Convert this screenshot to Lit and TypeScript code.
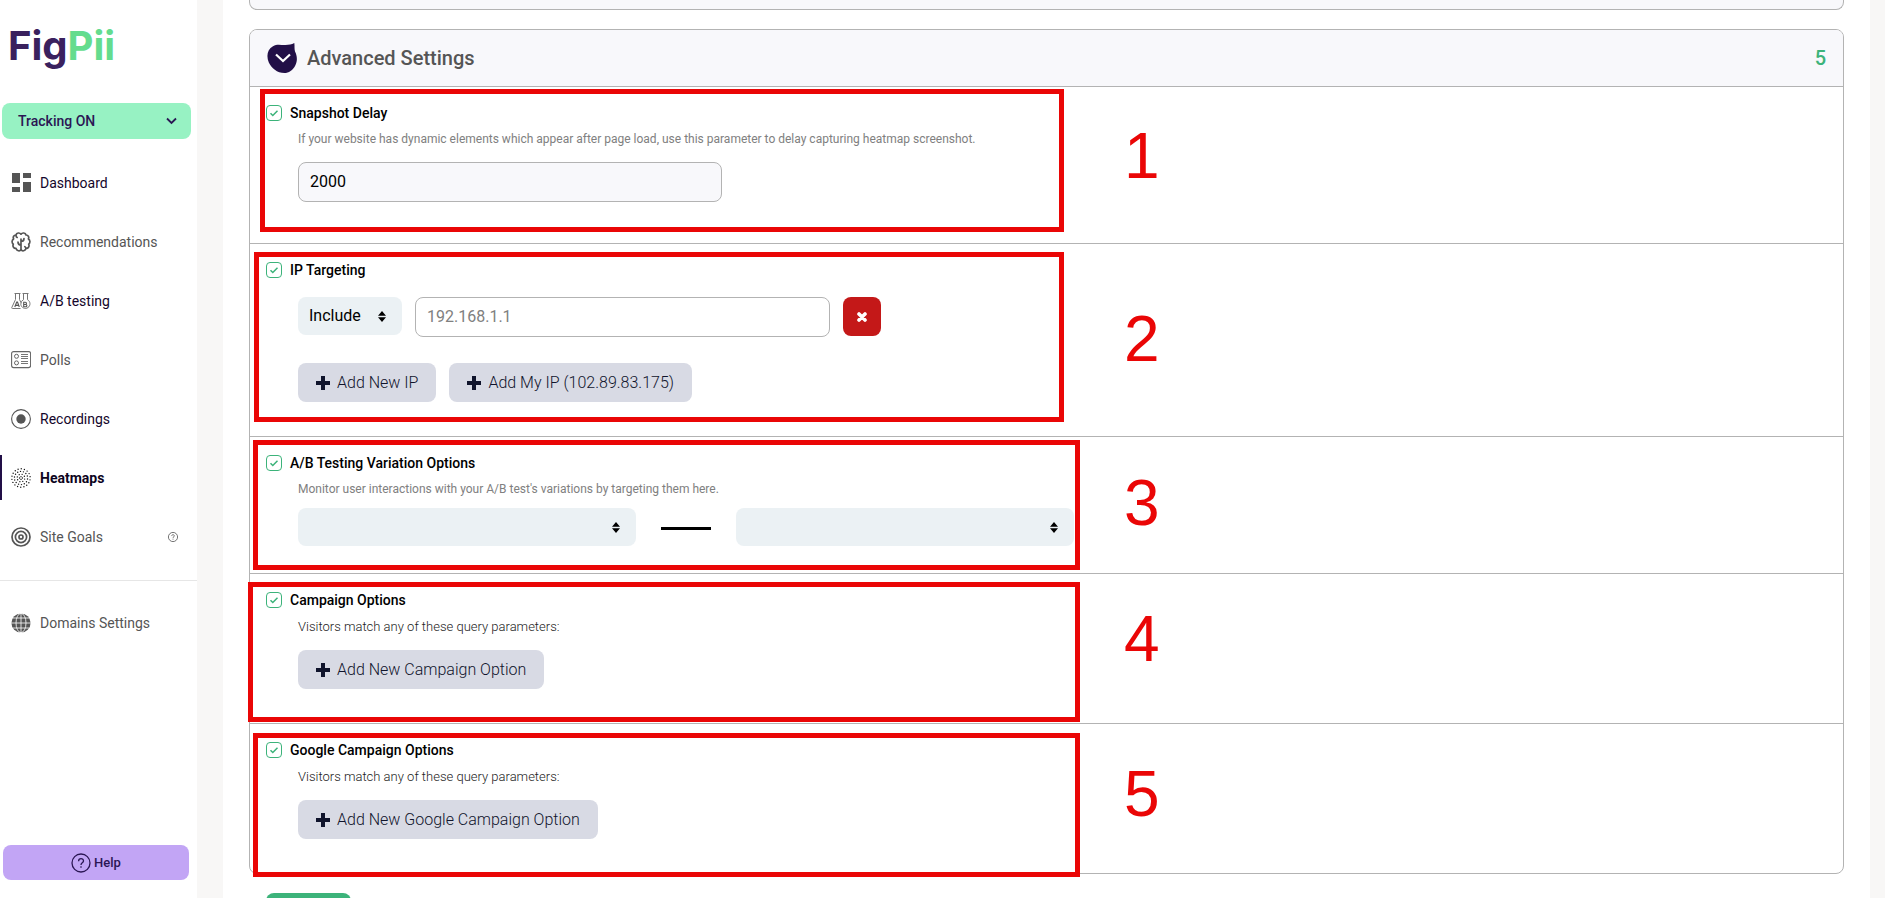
import { LitElement, html, css, svg, nothing, type TemplateResult } from "lit";
import { customElement, property } from "lit/decorators.js";
import { classMap } from "lit/directives/class-map.js";

type NavItem = {
  label: string;
  icon: TemplateResult;
  tone?: "dark" | "active";
  hint?: boolean;
};

const heatDots = [
  { r: 1.4, n: 4 },
  { r: 3.8, n: 8 },
  { r: 6.6, n: 14 },
  { r: 9.2, n: 18 },
].flatMap(({ r, n }, ring) =>
  Array.from({ length: n }, (_, i) => {
    const a = (i / n) * Math.PI * 2 + ring * 0.3;
    return svg`<circle cx=${10 + r * Math.cos(a)} cy=${10 + r * Math.sin(a)} r="0.7" fill="#111"/>`;
  })
);

const icons = {
  dashboard: svg`<g fill="#555"><path d="M1 0h8v10H1zM12 0h8v5h-8zM1 14h8v5H1zM12 9h8v10h-8z"/></g>`,
  brain: svg`<g fill="none" stroke="#555" stroke-width="1.700" stroke-linecap="round" stroke-linejoin="round">
    <path d="M10 2.200C8.800 .4 5.500 .6 5 3 2.900 2.900 1.600 5 2.600 6.900.700 8 .600 11 2.300 12.200 1.300 14.500 2.900 16.700 5 16.400 5.600 19 8.800 19.500 10 17.800 11.200 19.500 14.400 19 15 16.400 17.100 16.700 18.700 14.500 17.700 12.200 19.400 11 19.300 8 17.400 6.900 18.400 5 17.100 2.900 15 3 14.500.600 11.200.400 10 2.200z"/>
    <path d="M10 7v10.500M10 9.500c2 0 3-1 3-3M10 13c-2 0-3-.8-3-3M5 3.400c0 1 .4 1.600 1.200 2M15 16.400c-.2-1-.6-1.400-1.200-1.800"/></g>`,
  flasks: svg`<g fill="none" stroke="#777" stroke-width="1">
    <path d="M3.500 2.500h6M4.500 2.500v6L.8 16.500c-.2.700.1 1 .7 1h8M8.500 2.500v6l1.500 3.200M11.500 2.500h6M12.500 2.500v6.200M16.500 2.500v6.200a4.600 4.600 0 1 1-6.700 4.600 4.600 4.600 0 0 1 2.700-4.600"/></g>
    <path d="M3.800 16l1.900-5h.8L8.300 16M4.600 14.400h3" fill="none" stroke="#555" stroke-width="1.100"/>
    <path d="M12.700 11.200v4.600h1.800c1.800 0 1.800-2.300 0-2.300h-1.800 1.600c1.600 0 1.600-2.300 0-2.300z" fill="none" stroke="#555" stroke-width="1.100"/>`,
  polls: svg`<g fill="none" stroke="#666"><rect x=".6" y="1.600" width="19" height="16" rx="2" stroke-width="1.100"/>
    <circle cx="5.500" cy="6.300" r="2"/><circle cx="5.500" cy="12.900" r="2"/>
    <path d="M10 4.500h7M10 6.500h7M10 8.500h7M10 11.500h7M10 13.500h7" stroke-width=".9"/></g>`,
  record: svg`<circle cx="10" cy="10" r="9.400" fill="none" stroke="#555" stroke-width="1.100"/><circle cx="10" cy="10" r="4.700" fill="#555"/>`,
  heatmap: svg`${heatDots}`,
  target: svg`<g fill="none" stroke="#555" stroke-width="1.700"><circle cx="10" cy="10" r="9"/><circle cx="10" cy="10" r="5.600"/><circle cx="10" cy="10" r="2"/></g>`,
  globe: svg`<circle cx="10" cy="10" r="9.600" fill="#555"/><g fill="none" stroke="#fff" stroke-width=".8"><ellipse cx="10" cy="10" rx="5" ry="9.600"/><path d="M10 0v20M0 10h20M1.500 5h17M1.500 15h17"/></g>`,
};

const navItems: NavItem[] = [
  { label: "Dashboard", icon: icons.dashboard, tone: "dark" },
  { label: "Recommendations", icon: icons.brain },
  { label: "A/B testing", icon: icons.flasks, tone: "dark" },
  { label: "Polls", icon: icons.polls },
  { label: "Recordings", icon: icons.record, tone: "dark" },
  { label: "Heatmaps", icon: icons.heatmap, tone: "active" },
  { label: "Site Goals", icon: icons.target, hint: true },
];

@customElement("side-bar")
export class SideBar extends LitElement {
  static styles = css`
    :host {
      display: flex;
      flex-direction: column;
      background: #fff;
      font-family: Roboto, sans-serif;
      font-size: 14px;
      color: #555;
    }
    .logo {
      padding: 22px 8px 0;
      font: 700 40px/48px Inter, sans-serif;
      color: #3a215e;
      text-decoration: none;
    }
    .logo-tail {
      color: #64dc8e;
    }
    .tracking {
      display: flex;
      align-items: center;
      justify-content: space-between;
      height: 36px;
      margin: 33px 6px 14px 2px;
      padding: 0 14px 0 16px;
      border: 0;
      border-radius: 8px;
      background: #97f2c3;
      color: #2b1654;
      font: 500 14px Roboto, sans-serif;
    }
    nav {
      display: flex;
      flex-direction: column;
    }
    .item {
      display: flex;
      align-items: center;
      gap: 9px;
      height: 45px;
      margin: 7px 0;
      padding: 0 18px 0 9px;
      border-left: 2px solid transparent;
      color: #555;
      text-decoration: none;
    }
    .item.dark {
      color: #14062b;
    }
    .item.active {
      border-left-color: #220f47;
      color: #0d0420;
      font-weight: 700;
    }
    .label {
      flex: 1;
    }
    .rule {
      width: 100%;
      height: 0;
      margin: 14px 0 12px;
      border: 0;
      border-top: 1px solid #e6e6e6;
    }
    .help {
      display: flex;
      align-items: center;
      justify-content: center;
      gap: 3px;
      height: 35px;
      margin: auto 8px 18px 3px;
      border: 0;
      border-radius: 8px;
      background: #c2a5f5;
      color: #2b1654;
      font: 500 13px Roboto, sans-serif;
    }
  `;

  private item({ label, icon, tone, hint }: NavItem) {
    return html`<a href="#" class=${classMap({ item: true, dark: tone === "dark", active: tone === "active" })}>
      <svg width="20" height="20" viewBox="0 0 20 20" aria-hidden="true">${icon}</svg>
      <span class="label">${label}</span>
      ${hint
        ? html`<svg width="12" height="12" viewBox="0 0 12 12" aria-hidden="true">
            <circle cx="6" cy="6" r="4.600" fill="none" stroke="#666" stroke-width=".9" />
            <path d="M4.700 5c0-1.800 2.700-1.700 2.600-.1 0 .9-1.300 1-1.300 2M6 7.700v.9" fill="none" stroke="#666" stroke-width=".9" />
          </svg>`
        : nothing}
    </a>`;
  }

  render() {
    return html`
      <a class="logo" href="#">Fig<span class="logo-tail">Pii</span></a>
      <button class="tracking" type="button">
        Tracking ON
        <svg width="11" height="8" viewBox="0 0 11 8" aria-hidden="true">
          <path d="M1 1.500l4.500 4.500L10 1.500" fill="none" stroke="#2b1654" stroke-width="1.800" />
        </svg>
      </button>
      <nav>
        ${navItems.map((n) => this.item(n))}
        <hr class="rule" />
        ${this.item({ label: "Domains Settings", icon: icons.globe })}
      </nav>
      <button class="help" type="button">
        <svg width="20" height="20" viewBox="0 0 20 20" aria-hidden="true">
          <circle cx="10" cy="10" r="9" fill="none" stroke="#2b1654" stroke-width="1.300" />
          <path d="M7.600 8.200c0-3.400 5-3.200 4.900-.2-.1 1.800-2.500 1.900-2.500 4M10 13.300v1.500" fill="none" stroke="#2b1654" stroke-width="1.300" />
        </svg>
        Help
      </button>
    `;
  }
}

@customElement("setting-section")
export class SettingSection extends LitElement {
  @property() heading = "";
  @property() note = "";
  @property({ type: Boolean }) plain = false;

  static styles = css`
    :host {
      display: block;
      padding: 18px 16px 0;
      font-family: Roboto, sans-serif;
    }
    .heading {
      display: flex;
      align-items: center;
      gap: 8px;
      height: 16px;
      color: #000;
      font-size: 14px;
      line-height: 16px;
      font-weight: 500;
    }
    .tick {
      appearance: none;
      width: 16px;
      height: 16px;
      margin: 0;
      border: 1px solid #3cb37a;
      border-radius: 4px;
      background: #fff
        url("data:image/svg+xml,%3Csvg xmlns='http://www.w3.org/2000/svg' viewBox='0 0 14 14'%3E%3Cpath d='M3.500 7.200l2.300 2.300 4.700-4.700' fill='none' stroke='%233cb37a' stroke-width='1.500'/%3E%3C/svg%3E");
    }
    .note {
      margin: 10px 0 0 32px;
      color: #808080;
      font-size: 12px;
      line-height: 16px;
    }
    .note.plain {
      margin-top: 11px;
      color: #222;
      font-size: 13px;
      font-weight: 300;
    }
    .body {
      margin-left: 32px;
    }
  `;

  render() {
    return html`
      <label class="heading"><input class="tick" type="checkbox" checked />${this.heading}</label>
      ${this.note ? html`<p class=${classMap({ note: true, plain: this.plain })}>${this.note}</p>` : nothing}
      <div class="body"><slot></slot></div>
    `;
  }
}

@customElement("app-root")
export class AppRoot extends LitElement {
  static styles = css`
    :host {
      display: block;
      font-family: Roboto, sans-serif;
    }
    * {
      box-sizing: border-box;
    }
    .shell {
      display: grid;
      grid-template-columns: 197px minmax(0, 1fr);
      grid-template-rows: minmax(0, 1fr);
      height: 100vh;
      overflow: hidden;
      background: #f8f7f6;
    }
    main {
      margin: 0 15px 0 26px;
      padding: 0 26px;
      background: #fff;
    }
    .card {
      border: 1px solid #b3b3b3;
      border-radius: 8px;
    }
    .previous {
      height: 10px;
      margin-bottom: 19px;
      border-top: 0;
      border-radius: 0 0 8px 8px;
      background: #f8f8fb;
    }
    .head {
      display: flex;
      align-items: center;
      gap: 10px;
      width: 100%;
      height: 56px;
      padding: 0 17px;
      border: 0;
      border-radius: 7px 7px 0 0;
      background: #f8f8fb;
      color: #555;
      font: 500 20px Roboto, sans-serif;
      text-align: left;
    }
    .title {
      flex: 1;
    }
    .count {
      color: #3cb37a;
    }
    .row {
      position: relative;
      border-top: 1px solid #b3b3b3;
    }
    .delay { height: 157px; }
    .ip { height: 193px; }
    .variation { height: 137px; }
    .campaign { height: 150px; }
    .line {
      display: flex;
      align-items: flex-start;
      gap: 13px;
    }
    .text {
      height: 40px;
      padding: 0 11px 2px;
      border: 1px solid #b3b3b3;
      border-radius: 8px;
      background: #fff;
      color: #000;
      font: 400 16px Roboto, sans-serif;
    }
    .text::placeholder {
      color: #808080;
    }
    .ms {
      width: 424px;
      margin-top: 15px;
      background: #f8f8fb;
    }
    .address {
      width: 415px;
    }
    .line.first {
      margin-top: 19px;
    }
    .line.second {
      margin-top: 26px;
    }
    .pick {
      appearance: none;
      height: 38px;
      padding: 0 11px 2px;
      border: 0;
      border-radius: 8px;
      background: #ebf1f4
        url("data:image/svg+xml,%3Csvg xmlns='http://www.w3.org/2000/svg' width='8' height='11'%3E%3Cpath d='M4 0l4 4.800H0zM4 11l4-4.800H0z'/%3E%3C/svg%3E")
        no-repeat right 16px center;
      color: #000;
      font: 400 16px Roboto, sans-serif;
    }
    .mode {
      width: 104px;
    }
    .wide {
      width: 338px;
    }
    .remove {
      display: grid;
      place-items: center;
      width: 38px;
      height: 39px;
      padding: 0;
      border: 0;
      border-radius: 8px;
      background: #c41818;
    }
    .add {
      display: flex;
      align-items: center;
      gap: 7px;
      height: 39px;
      padding: 0 18px;
      border: 0;
      border-radius: 8px;
      background: #d8dae4;
      color: #10142c;
      font: 300 16px Roboto, sans-serif;
    }
    .pair {
      display: flex;
      align-items: center;
      gap: 25px;
      margin-top: 11px;
    }
    .dash {
      width: 50px;
      height: 3px;
      margin-top: 3px;
      background: #000;
    }
    .solo {
      margin-top: 15px;
    }
    .save {
      width: 85px;
      height: 40px;
      margin: 19px 0 0 17px;
      border: 0;
      border-radius: 8px;
      background: #3cb37a;
      color: #fff;
      font: 500 16px Roboto, sans-serif;
    }
    /* Callout frames and numbers drawn over the form rows */
    .frame {
      position: absolute;
      border: 5px solid #ea0606;
      pointer-events: none;
    }
    .frame-1 { left: 10px; top: 2px; width: 804px; height: 143px; }
    .frame-2 { left: 4px; top: 8px; width: 810px; height: 170px; }
    .frame-3 { left: 3px; top: 3px; width: 827px; height: 130px; }
    .frame-4 { left: -2px; top: 8px; width: 832px; height: 140px; }
    .frame-5 { left: 3px; top: 9px; width: 827px; height: 144px; }
    .digit {
      position: absolute;
      left: 874px;
      color: #ea0606;
      font: 400 64px/64px "Liberation Sans", sans-serif;
    }
    .digit-1 { top: 37px; }
    .digit-2 { top: 63px; }
    .digit-3 { top: 34px; }
    .digit-4 { top: 33px; }
    .digit-5 { top: 38px; }
  `;

  private callout(n: number) {
    return html`<div class="frame frame-${n}"></div><span class="digit digit-${n}">${n}</span>`;
  }

  private addButton(label: string, extra = "") {
    return html`<button class="add ${extra}" type="button">
      <svg width="14" height="14" viewBox="0 0 14 14" aria-hidden="true"><path d="M5 0h4v5h5v4H9v5H5V9H0V5h5z" fill="#10142c" /></svg>
      ${label}
    </button>`;
  }

  render() {
    const query = "Visitors match any of these query parameters:";
    return html`
      <div class="shell">
        <side-bar></side-bar>
        <main>
          <section class="card previous"></section>
          <section class="card">
            <button class="head" type="button" aria-expanded="true">
              <svg width="30" height="30" viewBox="0 0 30 30" aria-hidden="true">
                <path d="M27.300 0C27.800 3 27.200 5.500 28 8.500 30.300 13 30.500 18 28.500 22 26 27.500 21.500 30 17.500 30 10 30 4.500 25 1.800 19.500-1 13 .5 6 6 3.200 10 .8 14 2.200 18.500 2 22 1.900 24.500 1.600 27.300 0z" fill="#220f47" />
                <path d="M9 11.500l7 6.500 7-6.500" fill="none" stroke="#fff" stroke-width="2.200" />
              </svg>
              <span class="title">Advanced Settings</span>
              <span class="count">5</span>
            </button>

            <div class="row delay">
              <setting-section
                heading="Snapshot Delay"
                note="If your website has dynamic elements which appear after page load, use this parameter to delay capturing heatmap screenshot."
              >
                <input class="text ms" type="text" value="2000" aria-label="Snapshot delay" />
              </setting-section>
              ${this.callout(1)}
            </div>

            <div class="row ip">
              <setting-section heading="IP Targeting">
                <div class="line first">
                  <select class="pick mode" aria-label="Match mode"><option>Include</option></select>
                  <input class="text address" type="text" placeholder="192.168.1.1" aria-label="IP address" />
                  <button class="remove" type="button" aria-label="Remove IP">
                    <svg width="10" height="10" viewBox="0 0 10 10" aria-hidden="true"><path d="M2 2l6 6M8 2l-6 6" stroke="#fff" stroke-width="3.600" stroke-linecap="round" /></svg>
                  </button>
                </div>
                <div class="line second">
                  ${this.addButton("Add New IP")} ${this.addButton("Add My IP (102.89.83.175)")}
                </div>
              </setting-section>
              ${this.callout(2)}
            </div>

            <div class="row variation">
              <setting-section
                heading="A/B Testing Variation Options"
                note="Monitor user interactions with your A/B test's variations by targeting them here."
              >
                <div class="pair">
                  <select class="pick wide" aria-label="Test"></select>
                  <span class="dash"></span>
                  <select class="pick wide" aria-label="Variation"></select>
                </div>
              </setting-section>
              ${this.callout(3)}
            </div>

            <div class="row campaign">
              <setting-section heading="Campaign Options" note=${query} plain>
                ${this.addButton("Add New Campaign Option", "solo")}
              </setting-section>
              ${this.callout(4)}
            </div>

            <div class="row campaign">
              <setting-section heading="Google Campaign Options" note=${query} plain>
                ${this.addButton("Add New Google Campaign Option", "solo")}
              </setting-section>
              ${this.callout(5)}
            </div>
          </section>
          <button class="save" type="button" aria-label="Save"></button>
        </main>
      </div>
    `;
  }
}
